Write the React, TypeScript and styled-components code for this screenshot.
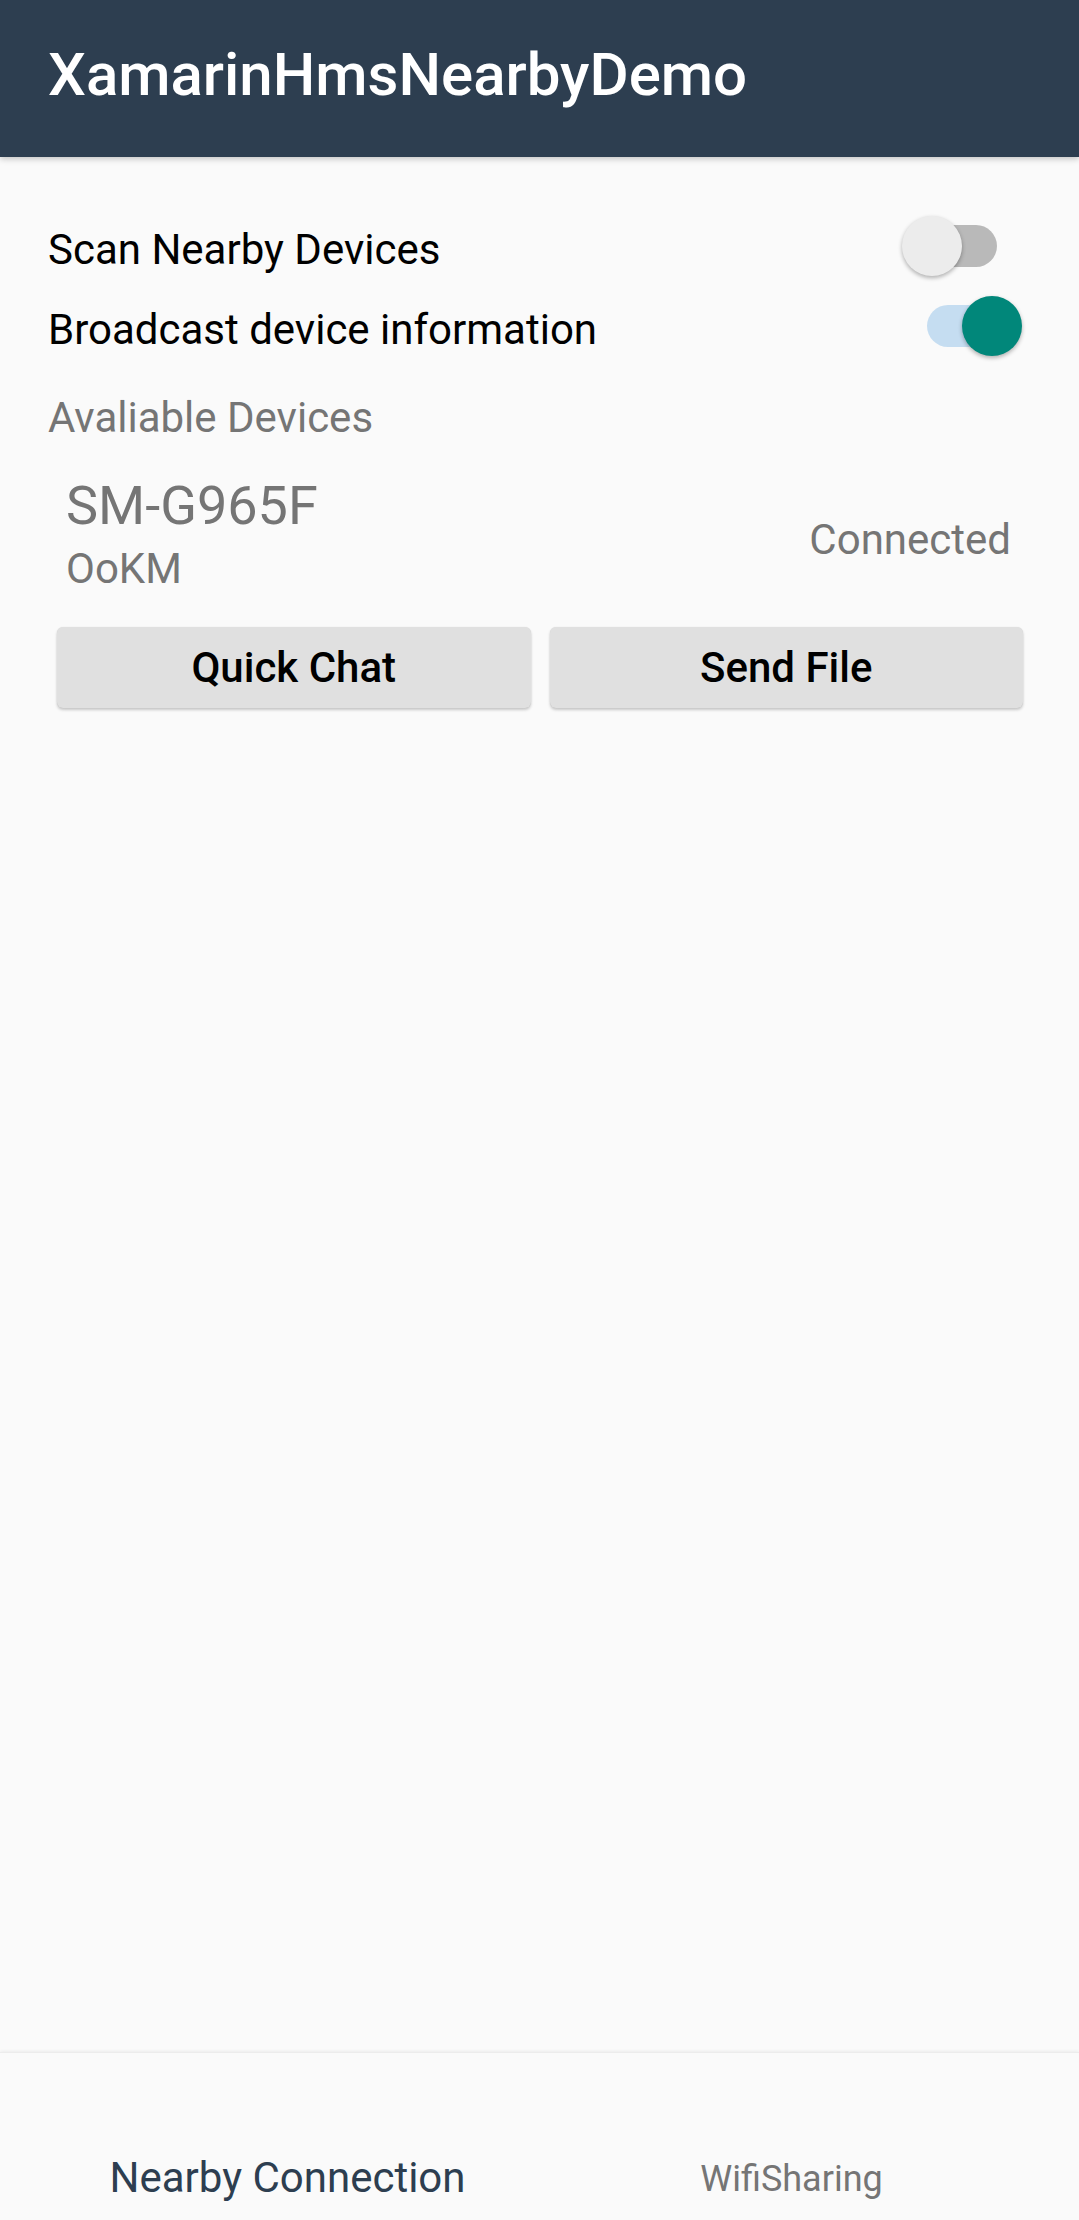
import React, { useState } from "react";
import styled, { createGlobalStyle } from "styled-components";

// GLOBAL
const GlobalStyle = createGlobalStyle`
  html, body {
    margin: 0;
    padding: 0;
    background: #fafafa;
  }
  body {
    font-family: Roboto, "Noto Sans", "Liberation Sans", sans-serif;
    -webkit-font-smoothing: antialiased;
  }
  * { box-sizing: border-box; }
`;

// STYLED COMPONENTS
const Screen = styled.div`
  width: 1079px;
  height: 2220px;
  display: flex;
  flex-direction: column;
  background: #fafafa;
  overflow: hidden;
`;

const Toolbar = styled.header`
  height: 157px;
  flex-shrink: 0;
  display: flex;
  align-items: center;
  padding: 0 48px 8px;
  background: #2d3e50;
  box-shadow: 0 2px 6px rgba(0, 0, 0, 0.22);
  position: relative;
  z-index: 1;
`;

const Title = styled.h1`
  margin: 0;
  font-size: 60px;
  font-weight: 500;
  line-height: 70px;
  color: #ffffff;
`;

const Content = styled.main`
  flex: 1;
  padding: 49px 48px 0;
`;

const SwitchRow = styled.div`
  height: 80px;
  display: flex;
  align-items: center;
  justify-content: space-between;
  padding-right: 9px;
`;

const RowLabel = styled.span`
  font-size: 42px;
  line-height: 49px;
  padding-top: 7px;
  color: #000000;
`;

const SwitchBox = styled.button<{ $on: boolean }>`
  position: relative;
  width: 120px;
  height: 60px;
  padding: 0;
  border: none;
  background: transparent;
  cursor: pointer;
`;

const Track = styled.span<{ $on: boolean }>`
  position: absolute;
  left: 25px;
  top: 9px;
  width: 70px;
  height: 42px;
  border-radius: 21px;
  background: ${(p) => (p.$on ? "#c5ddf1" : "#b9b9b9")};
`;

const Thumb = styled.span<{ $on: boolean }>`
  position: absolute;
  top: 0;
  left: ${(p) => (p.$on ? "60px" : "0px")};
  width: 60px;
  height: 60px;
  border-radius: 50%;
  background: ${(p) => (p.$on ? "#01877a" : "#ececec")};
  box-shadow: 0 2px 4px rgba(0, 0, 0, 0.3);
  transition: left 0.15s;
`;

const SectionLabel = styled.div`
  margin-top: 27px;
  font-size: 42px;
  line-height: 49px;
  color: #757575;
`;

const DeviceItem = styled.div`
  margin-top: 32px;
  display: flex;
  align-items: center;
  justify-content: space-between;
  padding: 0 20px 0 18px;
`;

const DeviceInfo = styled.div`
  display: flex;
  flex-direction: column;
`;

const DeviceName = styled.span`
  font-size: 54px;
  line-height: 63px;
  color: #757575;
`;

const DeviceId = styled.span`
  margin-top: 7px;
  font-size: 42px;
  line-height: 49px;
  color: #757575;
`;

const DeviceStatus = styled.span`
  font-size: 42px;
  line-height: 49px;
  padding-top: 12px;
  color: #757575;
`;

const ButtonRow = styled.div`
  margin: 34px 8px 0 9px;
  display: grid;
  grid-template-columns: 1fr 1fr;
  gap: 19px;
`;

const ActionButton = styled.button`
  height: 81px;
  border: none;
  border-radius: 6px;
  background: #e0e0e0;
  box-shadow: 0 2px 3px rgba(0, 0, 0, 0.2), 0 0 1px rgba(0, 0, 0, 0.12);
  font-family: inherit;
  font-size: 42px;
  font-weight: 500;
  line-height: 49px;
  color: #000000;
  cursor: pointer;
`;

const TabBar = styled.nav`
  height: 168px;
  flex-shrink: 0;
  display: flex;
  justify-content: center;
  background: #fafafa;
  border-top: 1px solid #ececec;
  box-shadow: 0 -1px 3px rgba(0, 0, 0, 0.06);
`;

const TabItem = styled.div<{ $active: boolean }>`
  width: 504px;
  display: flex;
  align-items: flex-end;
  justify-content: center;
  padding-bottom: ${(p) => (p.$active ? "18px" : "20px")};
  font-size: ${(p) => (p.$active ? "42px" : "36px")};
  line-height: ${(p) => (p.$active ? "49px" : "42px")};
  color: ${(p) => (p.$active ? "#2d3e50" : "#757575")};
`;

// =================================================================
type Device = { name: string; id: string; status: string };
// =================================================================

const devices: Device[] = [{ name: "SM-G965F", id: "OoKM", status: "Connected" }];

export default function App() {
  const [scan, setScan] = useState(false);
  const [broadcast, setBroadcast] = useState(true);

  return (
    <>
      <GlobalStyle />
      <Screen>
        <Toolbar>
          <Title>XamarinHmsNearbyDemo</Title>
        </Toolbar>

        <Content>
          <SwitchRow>
            <RowLabel>Scan Nearby Devices</RowLabel>
            <SwitchBox $on={scan} onClick={() => setScan(!scan)} aria-label="Scan Nearby Devices">
              <Track $on={scan} />
              <Thumb $on={scan} />
            </SwitchBox>
          </SwitchRow>

          <SwitchRow>
            <RowLabel>Broadcast device information</RowLabel>
            <SwitchBox
              $on={broadcast}
              onClick={() => setBroadcast(!broadcast)}
              aria-label="Broadcast device information"
            >
              <Track $on={broadcast} />
              <Thumb $on={broadcast} />
            </SwitchBox>
          </SwitchRow>

          <SectionLabel>Avaliable Devices</SectionLabel>

          {devices.map((d) => (
            <div key={d.id}>
              <DeviceItem>
                <DeviceInfo>
                  <DeviceName>{d.name}</DeviceName>
                  <DeviceId>{d.id}</DeviceId>
                </DeviceInfo>
                <DeviceStatus>{d.status}</DeviceStatus>
              </DeviceItem>

              <ButtonRow>
                <ActionButton>Quick Chat</ActionButton>
                <ActionButton>Send File</ActionButton>
              </ButtonRow>
            </div>
          ))}
        </Content>

        <TabBar>
          <TabItem $active>Nearby Connection</TabItem>
          <TabItem $active={false}>WifiSharing</TabItem>
        </TabBar>
      </Screen>
    </>
  );
}
